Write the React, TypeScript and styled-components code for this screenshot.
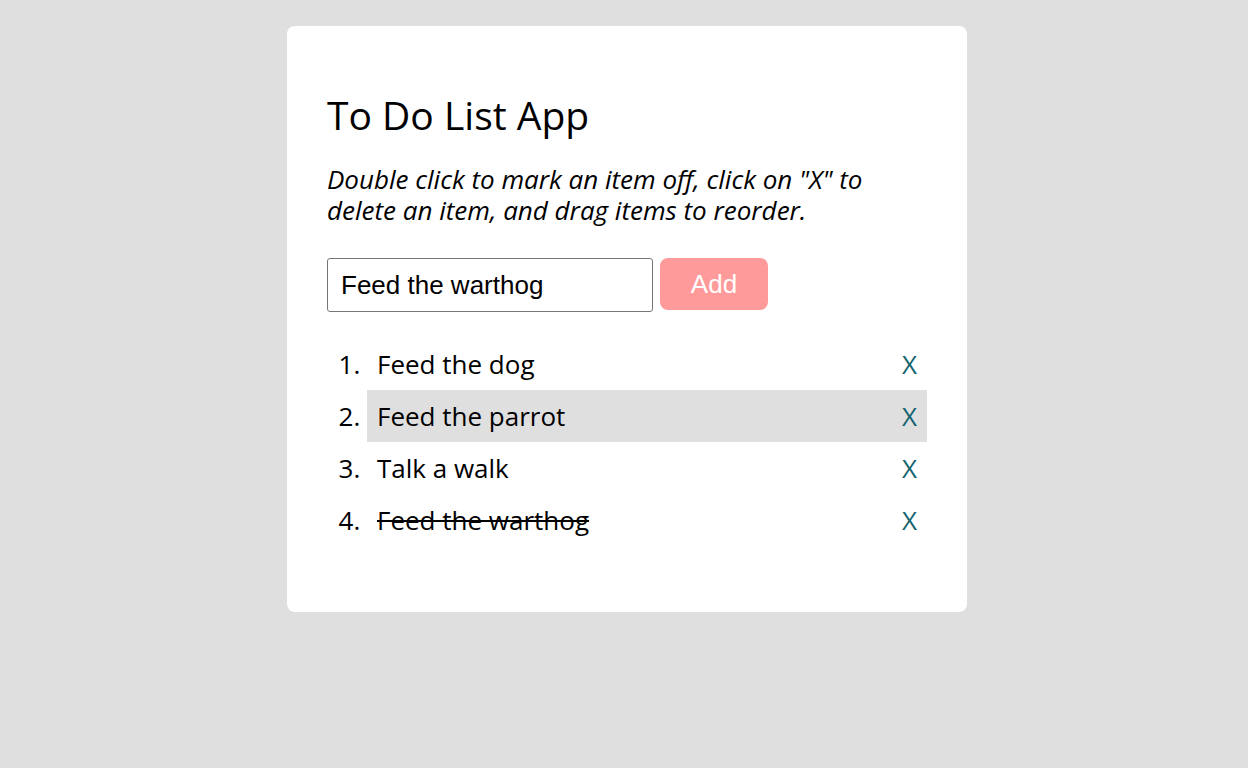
import React from "react";
import styled, { createGlobalStyle } from "styled-components";

const Global = createGlobalStyle`
  html, body { margin: 0; padding: 0; background: #dfdfdf; }
  body { font-family: "Open Sans", sans-serif; color: #000; }
`;

const Page = styled.div`
  padding: 26px 0 26px 6px;
  display: flex;
  justify-content: center;
`;

const Card = styled.main`
  width: 680px;
  box-sizing: border-box;
  background: #fff;
  border-radius: 8px;
  padding: 63px 40px 66px;
`;

const Title = styled.h1`
  margin: 0 0 23px;
  font-size: 39px;
  font-weight: 400;
  line-height: 52px;
`;

const Hint = styled.p`
  margin: 0 0 32px;
  font-size: 26px;
  font-style: italic;
  line-height: 31px;
  max-width: 560px;
`;

const Form = styled.form`
  display: flex;
  align-items: flex-start;
  gap: 7px;
  margin-bottom: 26px;
`;

const Input = styled.input`
  width: 326px;
  height: 54px;
  box-sizing: border-box;
  border: 1px solid #767676;
  border-radius: 3px;
  padding: 0 13px;
  font-family: "Liberation Sans", Arial, sans-serif;
  font-size: 26px;
  color: #000;
  outline: none;
`;

const AddButton = styled.button`
  width: 108px;
  height: 52px;
  border: none;
  border-radius: 8px;
  background: #ff9a9a;
  color: #fff;
  font-family: "Liberation Sans", Arial, sans-serif;
  font-size: 26px;
  padding: 0;
`;

const List = styled.ol`
  margin: 0;
  padding: 0 0 0 40px;
  font-size: 26px;
`;

const Item = styled.li<{ $active?: boolean }>`
  line-height: 52px;
  height: 52px;
  padding: 0 10px;
  background: ${(p) => (p.$active ? "#dfdfdf" : "transparent")};
`;

const Row = styled.div`
  display: flex;
  justify-content: space-between;
`;

const Label = styled.span<{ $done?: boolean }>`
  text-decoration: ${(p) => (p.$done ? "line-through" : "none")};
  text-decoration-thickness: 2px;
`;

const Remove = styled.span`
  color: #13646e;
  cursor: pointer;
`;

const items = [
  { text: "Feed the dog" },
  { text: "Feed the parrot", active: true },
  { text: "Talk a walk" },
  { text: "Feed the warthog", done: true },
];

export default function App() {
  return (
    <>
      <Global />
      <Page>
        <Card>
          <Title>To Do List App</Title>
          <Hint>
            Double click to mark an item off, click on "X" to delete an item, and drag items to reorder.
          </Hint>
          <Form onSubmit={(e) => e.preventDefault()}>
            <Input defaultValue="Feed the warthog" />
            <AddButton type="submit">Add</AddButton>
          </Form>
          <List>
            {items.map((it) => (
              <Item key={it.text} $active={it.active}>
                <Row>
                  <Label $done={it.done}>{it.text}</Label>
                  <Remove>X</Remove>
                </Row>
              </Item>
            ))}
          </List>
        </Card>
      </Page>
    </>
  );
}
